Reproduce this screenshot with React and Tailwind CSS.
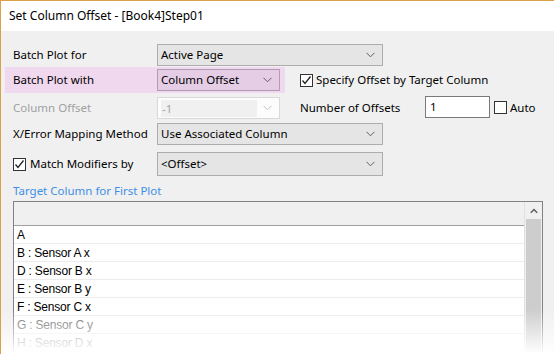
import React from "react";

const Chevron = ({ color = "#606060" }) => (
  <svg width="9" height="6" viewBox="0 0 9 6" className="shrink-0">
    <polyline points="0.5,0.8 4.5,4.8 8.5,0.8" fill="none" stroke={color} strokeWidth="1" />
  </svg>
);

const Check = ({ checked }) => (
  <span className="w-[13px] h-[13px] border border-[#333] bg-white flex items-center justify-center shrink-0">
    {checked && (
      <svg width="11" height="11" viewBox="0 0 11 11">
        <polyline points="1.5,5.5 4,8.5 9.5,1.5" fill="none" stroke="#222" strokeWidth="1.3" />
      </svg>
    )}
  </span>
);

function Combo({ value, className = "", disabled }) {
  return (
    <div
      className={
        "flex items-center justify-between pl-[3px] pr-[7px] border " +
        (disabled
          ? "border-[#d9d9d9] bg-[#fcfcfc] text-[#a3a3a3]"
          : "border-[#adadad] bg-[#e5e5e5] text-black") +
        " " +
        className
      }
    >
      <span className={disabled ? "bg-[#f0f0f0] flex-1 h-[17px] leading-[17px] pl-[1px] mr-[6px]" : ""}>{value}</span>
      <Chevron color={disabled ? "#c4c4c4" : "#606060"} />
    </div>
  );
}

const rows = [
  { t: "A", c: "text-black" },
  { t: "B : Sensor A x", c: "text-black" },
  { t: "D : Sensor B x", c: "text-black" },
  { t: "E : Sensor B y", c: "text-black" },
  { t: "F : Sensor C x", c: "text-black" },
  { t: "G : Sensor C y", c: "text-[#6a6a6a]" },
  { t: "H : Sensor D x", c: "text-[#8a8a8a]" },
];

export default function App() {
  return (
    <div
      className="relative w-[554px] h-[354px] overflow-hidden bg-[#f0f0f0] border-l border-t border-[#dca049] border-r-[#6e6e6e] text-[11.5px] text-black"
      style={{ fontFamily: '"Noto Sans", "Open Sans", sans-serif' }}
    >
      <div className="h-[30px] bg-white flex items-center pl-[8px] pb-[1px] text-[12px]">
        Set Column Offset - [Book4]Step01
      </div>

      <div className="pl-[12px] pr-[11px] pt-[13px]">
        {/* row 1 */}
        <div className="flex items-center h-[22px]">
          <span className="w-[144px]">Batch Plot for</span>
          <Combo value="Active Page" className="w-[226px] h-[22px]" />
        </div>

        {/* row 2 */}
        <div className="flex items-center mt-[1px] h-[26px]">
          <div className="flex items-center h-[26px] -ml-[8px] pl-[8px] w-[280px] bg-[#f0d8ee]">
            <span className="w-[144px]">Batch Plot with</span>
            <Combo value="Column Offset" className="w-[123px] h-[22px] !bg-[#e6cde6] !border-[#b49ab4]" />
          </div>
          <div className="flex items-center ml-[15px] gap-[3px]">
            <Check checked />
            <span>Specify Offset by Target Column</span>
          </div>
        </div>

        {/* row 3 */}
        <div className="flex items-center mt-[3px] h-[23px]">
          <span className="w-[144px] text-[#a0a0a0]">Column Offset</span>
          <Combo value="-1" disabled className="w-[123px] h-[22px] mt-[1px]" />
          <span className="ml-[20px] w-[125px]">Number of Offsets</span>
          <div className="w-[65px] h-[22px] -mt-[1px] border border-[#7a7a7a] bg-white pl-[4px] leading-[20px]">1</div>
          <div className="flex items-center ml-[4px] gap-[3px]">
            <Check />
            <span>Auto</span>
          </div>
        </div>

        {/* row 4 */}
        <div className="flex items-center mt-[4px] h-[22px]">
          <span className="w-[144px]">X/Error Mapping Method</span>
          <Combo value="Use Associated Column" className="w-[226px] h-[22px]" />
        </div>

        {/* row 5 */}
        <div className="flex items-center mt-[7px] h-[24px]">
          <div className="w-[144px] flex items-center gap-[4px]">
            <Check checked />
            <span>Match Modifiers by</span>
          </div>
          <Combo value="<Offset>" className="w-[226px] h-[24px]" />
        </div>

        <div className="mt-[7px] h-[16px] leading-[16px] text-[#3c8fe6]">Target Column for First Plot</div>

        {/* table */}
        <div
          className="mt-[2px] w-[530px] border border-[#828282] border-b-0 bg-white flex"
          style={{ fontFamily: '"Liberation Sans", Arial, sans-serif' }}
        >
          <div className="flex-1">
            <div className="h-[24px] bg-[#f0f0f0] border-b border-[#a0a0a0]" />
            {rows.map((r) => (
              <div
                key={r.t}
                className={"h-[18px] leading-[17px] pt-[1px] pl-[3px] border-b border-[#ececec] text-[12px] tracking-[-0.2px] " + r.c}
              >
                {r.t}
              </div>
            ))}
          </div>
          <div className="w-[18px] bg-[#f0f0f0] border-l border-[#e0e0e0] flex flex-col items-center">
            <div className="h-[17px] flex items-center justify-center">
              <svg width="8" height="6" viewBox="0 0 8 6">
                <polyline points="0.8,4.8 4,1.5 7.2,4.8" fill="none" stroke="#606060" strokeWidth="1.5" />
              </svg>
            </div>
            <div className="w-[15px] flex-1 bg-[#cdcdcd]" />
          </div>
        </div>
      </div>

      <div className="absolute left-0 right-0 bottom-0 h-[44px] bg-gradient-to-b from-white/0 via-white/50 to-white" />
    </div>
  );
}
